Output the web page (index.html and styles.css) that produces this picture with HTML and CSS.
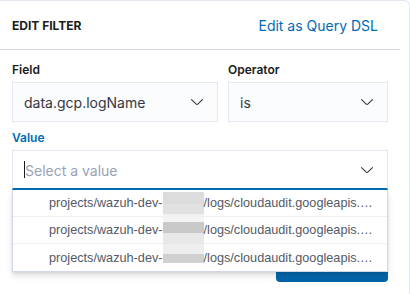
FILE: index.html
```html
<!DOCTYPE html>
<html>
<head>
<meta charset="utf-8">
<link rel="stylesheet" href="styles.css">
</head>
<body>
<div class="popover">
  <div class="header">
    <div class="title">EDIT FILTER</div>
    <a class="dsl">Edit as Query DSL</a>
  </div>
  <div class="body">
    <div class="row two">
      <div class="field">
        <div class="label">Field</div>
        <div class="control">
          <span class="val">data.gcp.logName</span>
          <svg class="chev" viewBox="0 0 16 16" width="16" height="16"><path d="M13.069 5.157L8.384 9.768a.546.546 0 01-.768 0L2.93 5.158a.552.552 0 00-.771 0 .53.53 0 000 .759l4.684 4.61c.641.631 1.672.63 2.312 0l4.684-4.61a.53.53 0 000-.76.552.552 0 00-.771 0z"/></svg>
        </div>
      </div>
      <div class="field">
        <div class="label">Operator</div>
        <div class="control">
          <span class="val">is</span>
          <svg class="chev" viewBox="0 0 16 16" width="16" height="16"><path d="M13.069 5.157L8.384 9.768a.546.546 0 01-.768 0L2.93 5.158a.552.552 0 00-.771 0 .53.53 0 000 .759l4.684 4.61c.641.631 1.672.63 2.312 0l4.684-4.61a.53.53 0 000-.76.552.552 0 00-.771 0z"/></svg>
        </div>
      </div>
    </div>
    <div class="row value-row">
      <div class="label active">Value</div>
      <div class="control focused">
        <span class="caret"></span><span class="placeholder">Select a value</span>
        <svg class="chev" viewBox="0 0 16 16" width="16" height="16"><path d="M13.069 5.157L8.384 9.768a.546.546 0 01-.768 0L2.93 5.158a.552.552 0 00-.771 0 .53.53 0 000 .759l4.684 4.61c.641.631 1.672.63 2.312 0l4.684-4.61a.53.53 0 000-.76.552.552 0 00-.771 0z"/></svg>
      </div>
      <div class="list">
        <div class="opt"><span>projects/wazuh-dev-</span><span class="blur b1"></span><span>/logs/cloudaudit.googleapis.…</span></div>
        <div class="opt"><span>projects/wazuh-dev-</span><span class="blur b2"></span><span>/logs/cloudaudit.googleapis.…</span></div>
        <div class="opt"><span>projects/wazuh-dev-</span><span class="blur b3"></span><span>/logs/cloudaudit.googleapis.…</span></div>
      </div>
    </div>
    <div class="footer">
      <div class="btn"></div>
    </div>
  </div>
</div>
</body>
</html>
```
FILE: styles.css
```css
* { box-sizing: border-box; }
html, body { margin: 0; padding: 0; background: #fff; }
body {
  width: 410px;
  height: 294px;
  overflow: hidden;
  font-family: Inter, "Noto Sans", sans-serif;
  color: #343741;
}
.popover {
  width: 410px;
  height: 294px;
  border-top: 1px solid #E3E8F0;
  border-right: 1px solid #E3E8F0;
  border-top-right-radius: 6px;
  padding-right: 9px;
}
.header {
  height: 49px;
  border-bottom: 1px solid #D3DAE6;
  display: flex;
  align-items: center;
  justify-content: space-between;
  padding: 0 22px 0 12px;
}
.title {
  font-size: 12px;
  font-weight: 700;
  color: #1a1c21;
  padding-top: 1px;
}
.dsl {
  font-size: 14px;
  color: #006BB4;
  padding-top: 1px;
}
.body {
  padding: 12px 12px 0 12px;
}
.row.two {
  display: grid;
  grid-template-columns: 1fr 160px;
  column-gap: 10px;
}
.label {
  font-size: 12px;
  font-weight: 600;
  line-height: 16px;
  height: 16px;
  margin-bottom: 4px;
  color: #1a1c21;
}
.label.active { color: #006BB4; }
.control {
  height: 40px;
  border: 1px solid #E4E8F0;
  background: #FBFCFD;
  display: flex;
  align-items: center;
  padding: 0 12px 0 11px;
  font-size: 14px;
}
.val { flex: 1; color: #343741; }
.chev { fill: #343741; flex: none; }
.value-row {
  position: relative;
  margin-top: 8px;
}
.control.focused {
  background: #fff;
  border-bottom: 2px solid #006BB4;
}
.caret {
  display: inline-block;
  width: 1px;
  height: 17px;
  background: #1a1c21;
  flex: none;
}
.placeholder {
  flex: 1;
  color: #98A2B3;
  padding-top: 1px;
}
.list {
  position: absolute;
  top: 100%;
  left: 0;
  right: 0;
  background: #fff;
  border: 1px solid #D3DAE6;
  border-top: none;
  box-shadow: 0 4px 6px rgba(0, 0, 0, 0.12), 0 1px 2px rgba(0, 0, 0, 0.08);
  z-index: 2;
  font-family: "Liberation Sans", Arial, sans-serif;
  font-size: 12.7px;
  color: #535966;
}
.opt {
  height: 27px;
  border-bottom: 1px solid #EEF0F3;
  display: flex;
  align-items: center;
  padding-left: 36px;
  white-space: nowrap;
}
.opt:last-child { border-bottom: none; height: 27px; }
.blur {
  display: inline-block;
  width: 41px;
  height: 27px;
  flex: none;
}
.b1 { background: linear-gradient(#fff 0 2px, #dcdcdc 2px 14px, #e1e1e1 14px 24px, #f2f2f2 24px); }
.b2 { background: linear-gradient(#f4f4f4 0 5px, #c9c9c9 5px 16px, #e8e8e8 16px 27px); }
.b3 { background: linear-gradient(#eeeeee 0 10px, #d0d0d0 10px 19px, #fff 19px); }
.footer {
  display: flex;
  justify-content: flex-end;
  margin-top: 52px;
}
.btn {
  width: 112px;
  height: 40px;
  border-radius: 4px;
  background: linear-gradient(#1a7ac0, #0063a8);
}
```
